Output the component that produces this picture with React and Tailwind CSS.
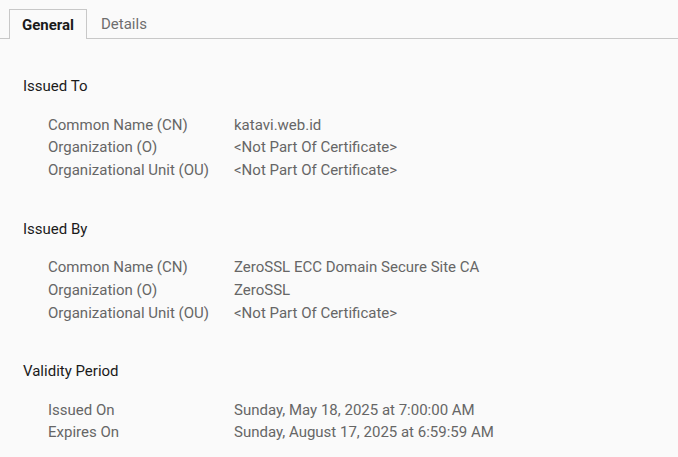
import React from 'react';

const sections = [
    {
        title: 'Issued To',
        rows: [
            ['Common Name (CN)', 'katavi.web.id'],
            ['Organization (O)', '<Not Part Of Certificate>'],
            ['Organizational Unit (OU)', '<Not Part Of Certificate>'],
        ],
    },
    {
        title: 'Issued By',
        rows: [
            ['Common Name (CN)', 'ZeroSSL ECC Domain Secure Site CA'],
            ['Organization (O)', 'ZeroSSL'],
            ['Organizational Unit (OU)', '<Not Part Of Certificate>'],
        ],
    },
    {
        title: 'Validity Period',
        rows: [
            ['Issued On', 'Sunday, May 18, 2025 at 7:00:00 AM'],
            ['Expires On', 'Sunday, August 17, 2025 at 6:59:59 AM'],
        ],
    },
];

export default function App() {
    return (
        <div className="min-h-screen w-full bg-[#fafafa] text-[15px]" style={{ fontFamily: 'Roboto, "Noto Sans", sans-serif' }}>
            {/* Tabs */}
            <div className="flex items-end pt-[9px] pl-[9px] border-b border-[#c8c8c8] h-[39px]">
                <div className="h-[30px] w-[78px] -mb-px pt-[2px] border border-b-0 border-[#c8c8c8] bg-[#fafafa] flex items-center justify-center font-bold text-[#1a1a1a]">
                    General
                </div>
                <div className="h-[30px] pt-[2px] flex items-center pl-[14px] text-[#6e6e6e]">Details</div>
            </div>

            {/* Content */}
            <div className="pt-[37px] pl-[23px] flex flex-col gap-[37px]">
                {sections.map((s) => (
                    <div key={s.title}>
                        <div className="leading-[20px] text-[#1a1a1a] mb-[17.5px]">{s.title}</div>
                        <div className="pl-[25px] flex flex-col">
                            {s.rows.map(([k, v]) => (
                                <div key={k} className="flex leading-[22.7px] text-[#666666]">
                                    <div className="w-[186px] shrink-0">{k}</div>
                                    <div>{v}</div>
                                </div>
                            ))}
                        </div>
                    </div>
                ))}
            </div>
        </div>
    );
}
